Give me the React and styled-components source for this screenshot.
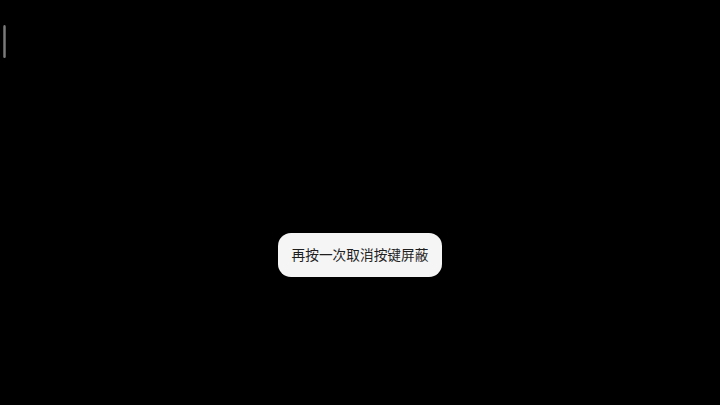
import React from "react";
import styled, { createGlobalStyle } from "styled-components";

function App() {
  return (
    <>
      <GlobalStyle />
      <Screen>
        <EdgeHandle />
        <Toast>再按一次取消按键屏蔽</Toast>
      </Screen>
    </>
  );
}

const GlobalStyle = createGlobalStyle`
  html, body {
    margin: 0;
    padding: 0;
    background: #000;
  }
  body {
    font-family: "Noto Sans CJK SC", "Noto Sans", sans-serif;
  }
`;

const Screen = styled.div`
  position: relative;
  width: 720px;
  height: 405px;
  background: #000;
  overflow: hidden;
  padding: 25px 0 0 3px;
  box-sizing: border-box;
`;

const EdgeHandle = styled.div`
  width: 3px;
  height: 33px;
  border-radius: 2px;
  background: linear-gradient(90deg, #4a4a4a, #7a7a7a 50%, #4a4a4a);
`;

const Toast = styled.div`
  position: absolute;
  left: 278px;
  top: 233px;
  width: 164px;
  height: 44px;
  box-sizing: border-box;
  display: flex;
  align-items: center;
  justify-content: center;
  border-radius: 13px;
  background: #f5f5f5;
  color: #1f1f1f;
  font-size: 13.7px;
  line-height: 1;
  white-space: nowrap;
`;

export default App;
